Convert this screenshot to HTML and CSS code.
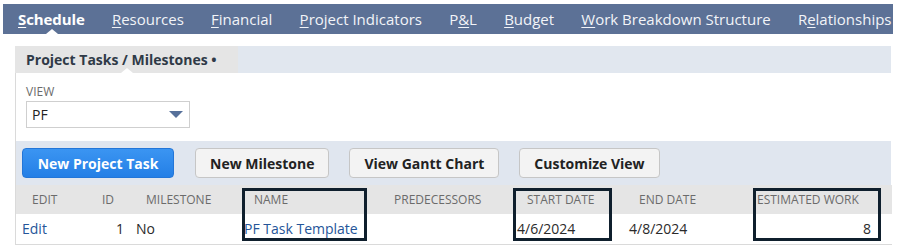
FILE: index.html
```html
<!DOCTYPE html>
<html>
<head>
<meta charset="utf-8">
<link rel="stylesheet" href="styles.css">
</head>
<body>
<nav class="tabs">
  <a class="tab active"><u>S</u>chedule</a>
  <a class="tab"><u>R</u>esources</a>
  <a class="tab"><u>F</u>inancial</a>
  <a class="tab"><u>P</u>roject Indicators</a>
  <a class="tab">P<u>&amp;</u>L</a>
  <a class="tab"><u>B</u>udget</a>
  <a class="tab"><u>W</u>ork Breakdown Structure</a>
  <a class="tab">R<u>e</u>lationships</a>
</nav>
<section class="panel">
  <div class="subtabs">
    <div class="subtab">Project Tasks / Milestones •</div>
  </div>
  <div class="body">
    <div class="view">
      <div class="view-label">VIEW</div>
      <div class="select"><span>PF</span><span class="caret"></span></div>
    </div>
    <div class="buttons">
      <button class="btn primary">New Project Task</button>
      <button class="btn">New Milestone</button>
      <button class="btn">View Gantt Chart</button>
      <button class="btn">Customize View</button>
    </div>
    <div class="table-wrap">
      <table class="grid">
        <colgroup>
          <col class="c-edit"><col class="c-id"><col class="c-ms"><col class="c-name"><col class="c-pred"><col class="c-start"><col class="c-end"><col class="c-est">
        </colgroup>
        <thead>
          <tr><th>Edit</th><th>ID</th><th>Milestone</th><th>Name</th><th>Predecessors</th><th>Start Date</th><th>End Date</th><th>Estimated Work</th></tr>
        </thead>
        <tbody>
          <tr><td><a class="link">Edit</a></td><td class="num">1</td><td>No</td><td><a class="link">PF Task Template</a></td><td></td><td>4/6/2024</td><td>4/8/2024</td><td class="num last">8</td></tr>
        </tbody>
      </table>
      <div class="mark mark-name"></div>
      <div class="mark mark-start"></div>
      <div class="mark mark-est"></div>
    </div>
  </div>
</section>
</body>
</html>
```
FILE: styles.css
```css
* { box-sizing: border-box; }
html, body { margin: 0; background: #fff; }
body {
  padding: 4px 6px 0 3px;
  font-family: "Open Sans", "Noto Sans", sans-serif;
  color: #333;
}
.tabs {
  display: flex;
  height: 30px;
  background: #5c7196;
  white-space: nowrap;
  overflow: hidden;
  margin-right: -2px;
}
.tab {
  position: relative;
  display: flex;
  align-items: center;
  padding: 0 13.6px;
  font-size: 15px;
  color: #f2f4f8;
}
.tab:first-child { padding-left: 15px; }
.tab:last-child { padding-right: 0; }
.tab u { text-decoration-thickness: 1px; text-underline-offset: 2px; }
.tab.active { font-weight: 700; color: #fff; letter-spacing: -0.1px; }
.tab.active::after {
  content: "";
  position: absolute;
  left: 43px;
  bottom: 0;
  border-left: 6px solid transparent;
  border-right: 6px solid transparent;
  border-bottom: 5px solid #fff;
}
.panel { margin: 12px 0 0 12px; }
.subtabs {
  height: 27px;
  background: #e1e7ef;
  display: flex;
}
.subtab {
  position: relative;
  width: 223px;
  background: #e5e5e5;
  font-weight: 700;
  font-size: 14px;
  color: #2f3a47;
  padding: 0 0 0 11px;
  display: flex;
  align-items: center;
}
.subtab::after {
  content: "";
  position: absolute;
  left: 106px;
  bottom: 0;
  border-left: 6px solid transparent;
  border-right: 6px solid transparent;
  border-bottom: 5px solid #fff;
}
.body { border-left: 1px solid #dadada; }
.view { padding: 10px 0 13px 10px; }
.view-label {
  font-size: 12px;
  color: #6b6b6b;
  line-height: 17px;
  height: 18px;
}
.select {
  width: 164px;
  height: 27px;
  border: 1px solid #cfcfcf;
  display: flex;
  align-items: center;
  justify-content: space-between;
  padding: 0 4px 0 5px;
  font-size: 14px;
  color: #222;
}
.caret {
  width: 0; height: 0;
  border-left: 7px solid transparent;
  border-right: 7px solid transparent;
  border-top: 7px solid #56709a;
  margin-right: 2px;
}
.buttons {
  height: 44px;
  background: #e0e6ef;
  display: flex;
  align-items: center;
  gap: 20px;
  padding-left: 6px;
}
.btn {
  height: 30px;
  border: 1px solid #c6c6c6;
  border-radius: 4px;
  background: #f3f3f3;
  font-family: inherit;
  font-size: 14px;
  font-weight: 700;
  color: #222;
  padding: 0 14px;
  white-space: nowrap;
}
.btn.primary {
  width: 152px;
  padding: 0;
  background: linear-gradient(#3b95f2, #247fe6);
  border-color: #2376d8;
  color: #fff;
  margin-right: 1px;
}
.table-wrap { position: relative; }
.grid {
  width: 876px;
  border-collapse: collapse;
  table-layout: fixed;
  font-size: 14px;
}
.c-edit { width: 70px; }
.c-id { width: 44px; }
.c-ms { width: 108px; }
.c-name { width: 140px; }
.c-pred { width: 133px; }
.c-start { width: 112px; }
.c-end { width: 118px; }
.c-est { width: 151px; }
.grid th {
  height: 29px;
  background: #e5e5e5;
  font-size: 12px;
  font-weight: 400;
  text-transform: uppercase;
  color: #6b6b6b;
  text-align: left;
  padding: 0 0 0 16px;
  white-space: nowrap;
}
.grid td {
  height: 30px;
  padding: 0 0 0 6px;
  border-bottom: 1px solid #dadada;
  color: #2a2a2a;
}
.grid td.num { text-align: right; padding: 0 6px 0 0; }
.grid td.last { padding-right: 21px; }
.link { color: #255599; }
.mark {
  position: absolute;
  top: 3px;
  height: 53px;
  border: 3px solid #0f1f2d;
}
.mark-name { left: 226px; width: 125px; }
.mark-start { left: 497px; width: 99px; }
.mark-est { left: 737px; width: 128px; }
```
